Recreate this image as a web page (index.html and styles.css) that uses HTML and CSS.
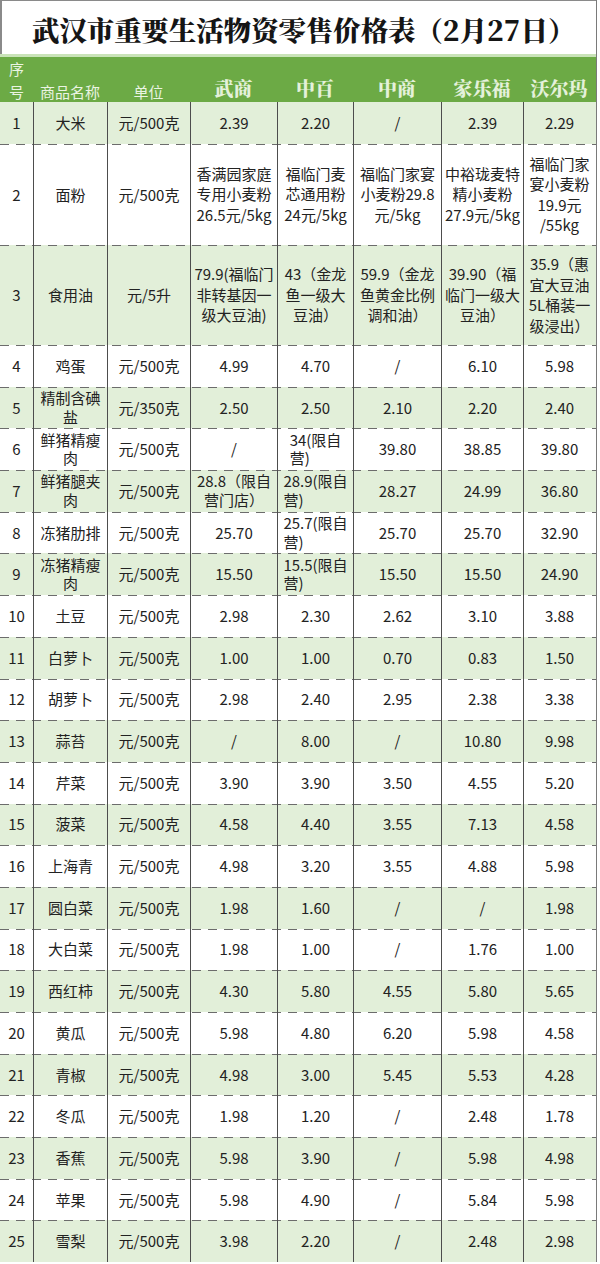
FILE: index.html
```html
<!DOCTYPE html>
<html lang="zh-CN">
<head>
<meta charset="utf-8">
<title>武汉市重要生活物资零售价格表</title>
<link rel="stylesheet" href="styles.css">
</head>
<body>
<div class="sheet">
  <div class="title">武汉市重要生活物资零售价格表（2月27日）</div>
  <div class="head">
    <div class="hc hc-no">序<br>号</div>
    <div class="hc">商品名称</div>
    <div class="hc">单位</div>
    <div class="hc store">武商</div>
    <div class="hc store">中百</div>
    <div class="hc store">中商</div>
    <div class="hc store">家乐福</div>
    <div class="hc store">沃尔玛</div>
  </div>

  <div class="row odd first">
    <div class="c">1</div><div class="c">大米</div><div class="c">元/500克</div><div class="c">2.39</div><div class="c">2.20</div><div class="c">/</div><div class="c">2.39</div><div class="c">2.29</div>
  </div>
  <div class="row tall r2">
    <div class="c">2</div><div class="c">面粉</div><div class="c">元/500克</div>
    <div class="c"><span class="ml">香满园家庭<br>专用小麦粉<br>26.5元/5kg</span></div>
    <div class="c"><span class="ml">福临门麦<br>芯通用粉<br>24元/5kg</span></div>
    <div class="c"><span class="ml">福临门家宴<br>小麦粉29.8<br>元/5kg</span></div>
    <div class="c"><span class="ml">中裕珑麦特<br>精小麦粉<br>27.9元/5kg</span></div>
    <div class="c"><span class="ml">福临门家<br>宴小麦粉<br>19.9元<br>/55kg</span></div>
  </div>
  <div class="row odd tall r3">
    <div class="c">3</div><div class="c">食用油</div><div class="c">元/5升</div>
    <div class="c"><span class="ml">79.9(福临门<br>非转基因一<br>级大豆油)</span></div>
    <div class="c"><span class="ml">43（金龙<br>鱼一级大<br>豆油）</span></div>
    <div class="c"><span class="ml">59.9（金龙<br>鱼黄金比例<br>调和油）</span></div>
    <div class="c"><span class="ml">39.90（福<br>临门一级大<br>豆油）</span></div>
    <div class="c"><span class="ml">35.9（惠<br>宜大豆油<br>5L桶装一<br>级浸出）</span></div>
  </div>
  <div class="row">
    <div class="c">4</div><div class="c">鸡蛋</div><div class="c">元/500克</div><div class="c">4.99</div><div class="c">4.70</div><div class="c">/</div><div class="c">6.10</div><div class="c">5.98</div>
  </div>
  <div class="row odd">
    <div class="c">5</div><div class="c"><span class="tl">精制含碘<br>盐</span></div><div class="c">元/350克</div><div class="c">2.50</div><div class="c">2.50</div><div class="c">2.10</div><div class="c">2.20</div><div class="c">2.40</div>
  </div>
  <div class="row">
    <div class="c">6</div><div class="c"><span class="tl">鲜猪精瘦<br>肉</span></div><div class="c">元/500克</div><div class="c">/</div><div class="c"><span class="tl ib">34(限自<br>营)</span></div><div class="c">39.80</div><div class="c">38.85</div><div class="c">39.80</div>
  </div>
  <div class="row odd">
    <div class="c">7</div><div class="c"><span class="tl">鲜猪腿夹<br>肉</span></div><div class="c">元/500克</div><div class="c"><span class="tl">28.8（限自<br>营门店）</span></div><div class="c"><span class="tl ib">28.9(限自<br>营)</span></div><div class="c">28.27</div><div class="c">24.99</div><div class="c">36.80</div>
  </div>
  <div class="row">
    <div class="c">8</div><div class="c">冻猪肋排</div><div class="c">元/500克</div><div class="c">25.70</div><div class="c"><span class="tl ib">25.7(限自<br>营)</span></div><div class="c">25.70</div><div class="c">25.70</div><div class="c">32.90</div>
  </div>
  <div class="row odd">
    <div class="c">9</div><div class="c"><span class="tl">冻猪精瘦<br>肉</span></div><div class="c">元/500克</div><div class="c">15.50</div><div class="c"><span class="tl ib">15.5(限自<br>营)</span></div><div class="c">15.50</div><div class="c">15.50</div><div class="c">24.90</div>
  </div>
  <div class="row">
    <div class="c">10</div><div class="c">土豆</div><div class="c">元/500克</div><div class="c">2.98</div><div class="c">2.30</div><div class="c">2.62</div><div class="c">3.10</div><div class="c">3.88</div>
  </div>
  <div class="row odd">
    <div class="c">11</div><div class="c">白萝卜</div><div class="c">元/500克</div><div class="c">1.00</div><div class="c">1.00</div><div class="c">0.70</div><div class="c">0.83</div><div class="c">1.50</div>
  </div>
  <div class="row">
    <div class="c">12</div><div class="c">胡萝卜</div><div class="c">元/500克</div><div class="c">2.98</div><div class="c">2.40</div><div class="c">2.95</div><div class="c">2.38</div><div class="c">3.38</div>
  </div>
  <div class="row odd">
    <div class="c">13</div><div class="c">蒜苔</div><div class="c">元/500克</div><div class="c">/</div><div class="c">8.00</div><div class="c">/</div><div class="c">10.80</div><div class="c">9.98</div>
  </div>
  <div class="row">
    <div class="c">14</div><div class="c">芹菜</div><div class="c">元/500克</div><div class="c">3.90</div><div class="c">3.90</div><div class="c">3.50</div><div class="c">4.55</div><div class="c">5.20</div>
  </div>
  <div class="row odd">
    <div class="c">15</div><div class="c">菠菜</div><div class="c">元/500克</div><div class="c">4.58</div><div class="c">4.40</div><div class="c">3.55</div><div class="c">7.13</div><div class="c">4.58</div>
  </div>
  <div class="row">
    <div class="c">16</div><div class="c">上海青</div><div class="c">元/500克</div><div class="c">4.98</div><div class="c">3.20</div><div class="c">3.55</div><div class="c">4.88</div><div class="c">5.98</div>
  </div>
  <div class="row odd">
    <div class="c">17</div><div class="c">圆白菜</div><div class="c">元/500克</div><div class="c">1.98</div><div class="c">1.60</div><div class="c">/</div><div class="c">/</div><div class="c">1.98</div>
  </div>
  <div class="row">
    <div class="c">18</div><div class="c">大白菜</div><div class="c">元/500克</div><div class="c">1.98</div><div class="c">1.00</div><div class="c">/</div><div class="c">1.76</div><div class="c">1.00</div>
  </div>
  <div class="row odd">
    <div class="c">19</div><div class="c">西红柿</div><div class="c">元/500克</div><div class="c">4.30</div><div class="c">5.80</div><div class="c">4.55</div><div class="c">5.80</div><div class="c">5.65</div>
  </div>
  <div class="row">
    <div class="c">20</div><div class="c">黄瓜</div><div class="c">元/500克</div><div class="c">5.98</div><div class="c">4.80</div><div class="c">6.20</div><div class="c">5.98</div><div class="c">4.58</div>
  </div>
  <div class="row odd">
    <div class="c">21</div><div class="c">青椒</div><div class="c">元/500克</div><div class="c">4.98</div><div class="c">3.00</div><div class="c">5.45</div><div class="c">5.53</div><div class="c">4.28</div>
  </div>
  <div class="row">
    <div class="c">22</div><div class="c">冬瓜</div><div class="c">元/500克</div><div class="c">1.98</div><div class="c">1.20</div><div class="c">/</div><div class="c">2.48</div><div class="c">1.78</div>
  </div>
  <div class="row odd">
    <div class="c">23</div><div class="c">香蕉</div><div class="c">元/500克</div><div class="c">5.98</div><div class="c">3.90</div><div class="c">/</div><div class="c">5.98</div><div class="c">4.98</div>
  </div>
  <div class="row">
    <div class="c">24</div><div class="c">苹果</div><div class="c">元/500克</div><div class="c">5.98</div><div class="c">4.90</div><div class="c">/</div><div class="c">5.84</div><div class="c">5.98</div>
  </div>
  <div class="row odd">
    <div class="c">25</div><div class="c">雪梨</div><div class="c">元/500克</div><div class="c">3.98</div><div class="c">2.20</div><div class="c">/</div><div class="c">2.48</div><div class="c">2.98</div>
  </div>
</div>
</body>
</html>
```

FILE: styles.css
```css
html, body {
  margin: 0;
  padding: 0;
  background: #ffffff;
}

body {
  font-family: "Noto Sans CJK SC", "Noto Sans", sans-serif;
  color: #222222;
  overflow: hidden;
}

.sheet {
  width: 596px;
  border-right: 1px solid #7a7a7a;
}

.title {
  height: 54px;
  border-top: 1px solid #8a8a8a;
  border-left: 2px solid #8a8a8a;
  box-sizing: border-box;
  display: flex;
  align-items: center;
  justify-content: flex-start;
  padding-left: 30px;
  padding-top: 3px;
  font-family: "Noto Serif CJK SC", "Noto Sans CJK SC", serif;
  font-weight: 900;
  font-size: 27.4px;
  letter-spacing: 0;
  color: #151515;
  white-space: nowrap;
}

.head {
  display: grid;
  grid-template-columns: 33px 74px 83px 87px 76px 88px 82px 72px;
  height: 48px;
  box-sizing: border-box;
  border-top: 3px solid #c9e3b8;
  background: #6caa45;
  color: #eaf4e2;
}

.hc {
  display: flex;
  align-items: flex-end;
  justify-content: center;
  text-align: center;
  font-size: 15px;
  line-height: 22px;
  padding-bottom: 0;
}

.hc-no {
  line-height: 23px;
}

.hc.store {
  font-family: "Noto Serif CJK SC", "Noto Sans CJK SC", serif;
  font-weight: 900;
  font-size: 19px;
  line-height: 24px;
  padding-bottom: 3px;
  color: #e4f1da;
}

.row {
  display: grid;
  grid-template-columns: 33px 74px 83px 87px 76px 88px 82px 72px;
  height: 41.7px;
  background-color: #ffffff;
  background-image: repeating-linear-gradient(90deg, #6c6c6c 0 9px, transparent 9px 16px);
  background-size: 100% 1px;
  background-repeat: no-repeat;
  background-position: 0 0;
}

.row.odd {
  background-color: #e2efd9;
}

.row.first {
  height: 42px;
  background-image: none;
}

.row.r2 {
  height: 101px;
}

.row.r3 {
  height: 100px;
}

.c {
  display: flex;
  align-items: center;
  justify-content: center;
  text-align: center;
  font-size: 15px;
  line-height: 20px;
  box-sizing: border-box;
  border-left: 1px solid #4d4d4d;
  white-space: nowrap;
  overflow: visible;
}

.c:first-child {
  border-left: none;
}

.ml {
  display: block;
  line-height: 20.5px;
}

.tl {
  display: block;
  line-height: 18.5px;
}

.tl.ib {
  display: inline-block;
  text-align: left;
}
```
